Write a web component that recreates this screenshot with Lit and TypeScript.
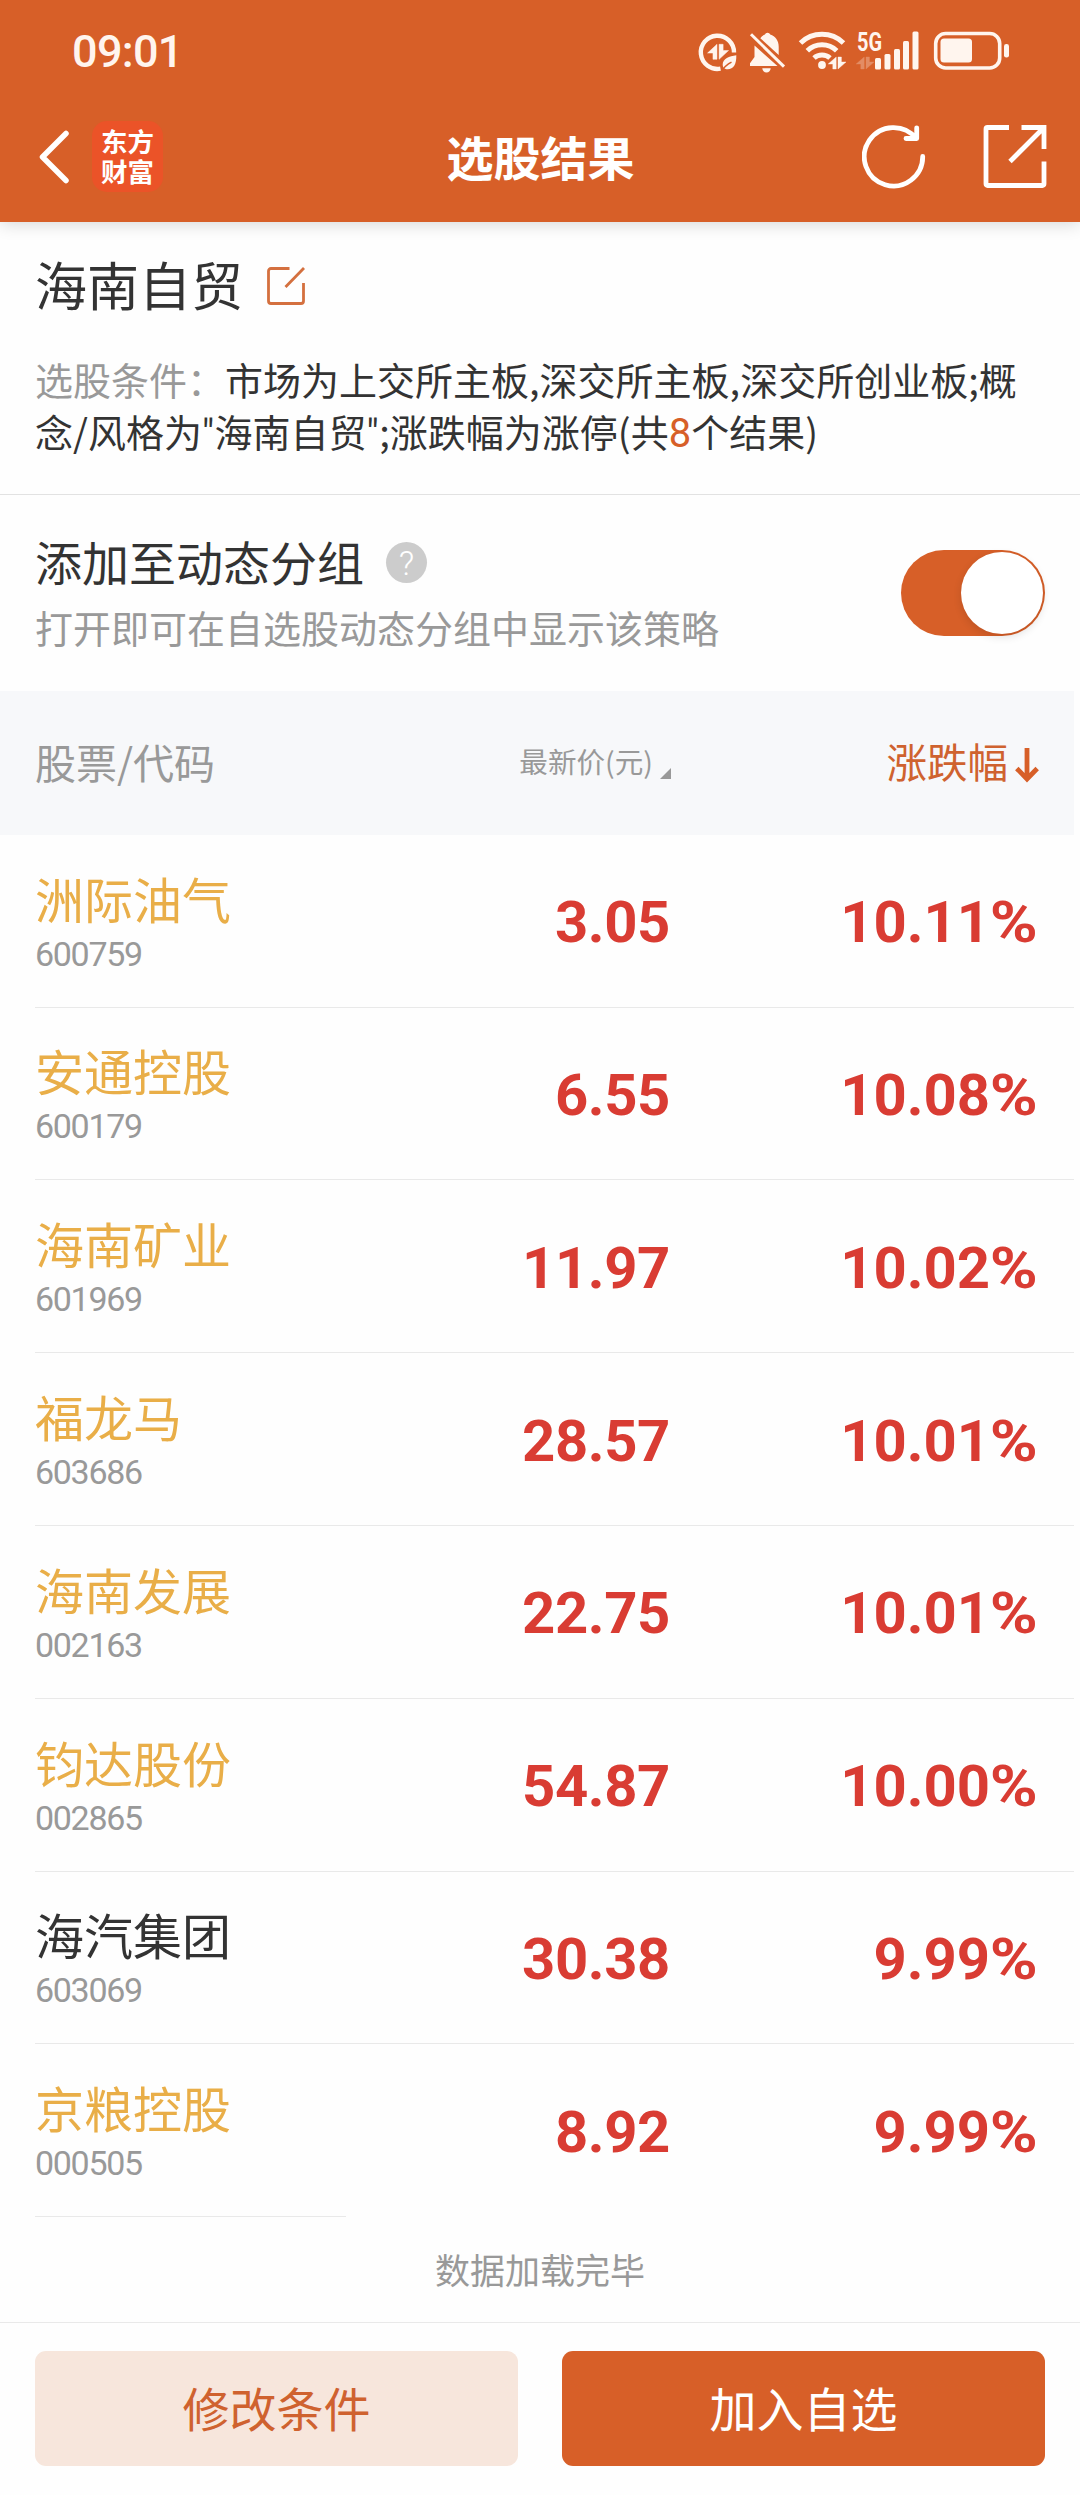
import { LitElement, html, svg, css } from "lit";
import { customElement, property, state } from "lit/decorators.js";
import { classMap } from "lit/directives/class-map.js";

interface Stock {
  name: string;
  code: string;
  price: string;
  change: string;
  plain?: boolean;
}

const STOCKS: Stock[] = [
  { name: "洲际油气", code: "600759", price: "3.05", change: "10.11" },
  { name: "安通控股", code: "600179", price: "6.55", change: "10.08" },
  { name: "海南矿业", code: "601969", price: "11.97", change: "10.02" },
  { name: "福龙马", code: "603686", price: "28.57", change: "10.01" },
  { name: "海南发展", code: "002163", price: "22.75", change: "10.01" },
  { name: "钧达股份", code: "002865", price: "54.87", change: "10.00" },
  { name: "海汽集团", code: "603069", price: "30.38", change: "9.99", plain: true },
  { name: "京粮控股", code: "000505", price: "8.92", change: "9.99" },
];

/* Up/down data arrows in an 18 x 12 box. */
const dataArrows = svg`<path d="M8.2 0v12H4.800V7H0.200zM10 0h3.400v5H18L10 12z" stroke="currentColor" stroke-width="0.400" stroke-linejoin="round"/>`;

@customElement("status-bar")
class StatusBar extends LitElement {
  static styles = css`
    :host {
      display: flex;
      align-items: flex-start;
      justify-content: space-between;
      height: 92px;
      padding: 30px 71px 0 72px;
      box-sizing: border-box;
      color: #fff5ee;
    }
    .time {
      font: 500 45px/44px Roboto, "Liberation Sans", sans-serif;
      letter-spacing: -0.7px;
    }
    .icons { display: flex; }
    svg { display: block; fill: currentColor; overflow: visible; }
    .saver { margin-right: 11px; }
    .bell { margin-right: 13px; }
    .wifi { margin-right: 10px; }
    .signal { margin-right: 15px; }
    .g5 { font: 700 25px Roboto, sans-serif; }
  `;

  render() {
    return html`
      <span class="time">09:01</span>
      <div class="icons">
        <svg class="saver" width="39" height="44" viewBox="698 30 39 44">
          <path d="M734 52.500A16.600 16.600 0 1 0 720.500 68.600" fill="none" stroke="currentColor" stroke-width="4.400"/>
          <g transform="translate(707.300 44.300) scale(1.180 1.250)">${dataArrows}</g>
          <path d="M736.300 55.300c-7 1-13.600 3.500-13.600 9.200 0 2 .8 4.300 3.600 4.700 6.500.9 10.300-4 10-13.900z"/>
          <path d="M721.500 71.500c2.500-4.200 5.500-7 10-9.300" fill="none" stroke="#d75f28" stroke-width="1.500"/>
        </svg>
        <svg class="bell" width="37" height="44" viewBox="748 30 37 44">
          <path d="M754.500 45.500V57l-4.500 6.200V66h27.500zM760.300 38.200c1.300-1.700 2.700-2.900 4.600-3.600a2.800 2.800 0 0 1 5.300 0c5.300 1.600 8.500 6.300 8.500 12.200v8.200zM762.300 68.300h8.400a4.200 4.200 0 0 1-8.400 0z"/>
          <path d="M751 34.300l33 32.300" fill="none" stroke="currentColor" stroke-width="3"/>
        </svg>
        <svg class="wifi" width="49" height="44" viewBox="798 30 49 44">
          <g fill="none" stroke="currentColor" stroke-width="5">
            <path d="M800.500 43a31 31 0 0 1 43 0"/>
            <path d="M807.300 50.800a21 21 0 0 1 29.400 0"/>
            <path d="M814 58a12 12 0 0 1 16 0"/>
          </g>
          <circle cx="822" cy="65" r="3.900"/>
          <g transform="translate(828 57)">${dataArrows}</g>
        </svg>
        <svg class="signal" width="62" height="44" viewBox="857 30 62 44">
          <text class="g5" x="857" y="50.500" textLength="25" lengthAdjust="spacingAndGlyphs">5G</text>
          <g transform="translate(856 57)" opacity="0.300">${dataArrows}</g>
          <rect x="875" y="58" width="6" height="11.500" rx="1.500"/>
          <rect x="884.500" y="54" width="6" height="15.500" rx="1.500"/>
          <rect x="894" y="49" width="6" height="20.500" rx="1.500"/>
          <rect x="903" y="41" width="6" height="28.500" rx="1.500"/>
          <rect x="912.500" y="31.500" width="6" height="38" rx="1.500"/>
        </svg>
        <svg class="battery" width="75" height="44" viewBox="934 30 75 44">
          <rect x="935.700" y="33.500" width="64" height="34.500" rx="10" fill="none" stroke="currentColor" stroke-width="3.600"/>
          <rect x="940.500" y="38.500" width="31.500" height="24" rx="3.500"/>
          <rect x="1004" y="44" width="5" height="13.500" rx="2.300"/>
        </svg>
      </div>
    `;
  }
}

@customElement("nav-bar")
class NavBar extends LitElement {
  @property() heading = "";

  static styles = css`
    :host {
      display: grid;
      grid-template-columns: 1fr auto 1fr;
      align-items: center;
      height: 130px;
      padding: 0 33px 1px 39px;
      box-sizing: border-box;
      color: #fff;
    }
    .left { display: flex; align-items: center; gap: 22px; }
    .right { display: flex; align-items: center; justify-content: flex-end; gap: 56px; }
    .heading {
      margin: 0;
      padding: 0 5px 2px 0;
      font-size: 47px;
      font-weight: 700;
      line-height: 60px;
    }
    .logo {
      display: flex;
      flex-direction: column;
      justify-content: center;
      align-items: center;
      width: 71px;
      height: 71px;
      padding-bottom: 2px;
      box-sizing: border-box;
      border-radius: 15px;
      background: #eb5328;
      font-size: 26.500px;
      font-weight: 700;
      line-height: 30px;
    }
    svg { display: block; fill: none; stroke: currentColor; }
  `;

  render() {
    return html`
      <div class="left">
        <svg width="31" height="54" viewBox="0 0 31 54" stroke-width="5.500" stroke-linecap="round" stroke-linejoin="round">
          <path d="M27 3.500L3.500 27 27 50.500"/>
        </svg>
        <div class="logo"><span>东方</span><span>财富</span></div>
      </div>
      <h1 class="heading">${this.heading}</h1>
      <div class="right">
        <svg width="65" height="64" viewBox="0 0 65 64" stroke-width="4.800" stroke-linecap="round" stroke-linejoin="round">
          <path d="M60.700 31.500A29.200 29.200 0 1 1 54.300 13.500M54.700 2.800V13.500H44"/>
        </svg>
        <svg width="64" height="64" viewBox="0 0 64 64" stroke-width="4.800">
          <path d="M26 2.500H4.500a1.500 1.500 0 0 0-1.500 1.500v55A1.500 1.500 0 0 0 4.500 60.500h55a1.500 1.500 0 0 0 1.500-1.500V36.500M38.500 2.500H61v21.500M60.500 3L27 36.500"/>
        </svg>
      </div>
    `;
  }
}

@customElement("toggle-switch")
class ToggleSwitch extends LitElement {
  @property({ type: Boolean }) on = false;

  static styles = css`
    :host { display: block; }
    .track {
      display: flex;
      box-sizing: border-box;
      width: 144px;
      height: 86px;
      padding: 2px;
      border-radius: 43px;
      background: #ddd;
    }
    .track.on { justify-content: flex-end; background: #d75f28; }
    .knob {
      width: 82px;
      height: 82px;
      border-radius: 50%;
      background: #fff;
      box-shadow: 0 3px 9px rgba(0, 0, 0, 0.12);
    }
  `;

  render() {
    return html`<div class=${classMap({ track: true, on: this.on })}><div class="knob"></div></div>`;
  }
}

@customElement("stock-row")
class StockRow extends LitElement {
  @property({ attribute: false }) stock!: Stock;
  @property({ type: Boolean }) last = false;

  static styles = css`
    :host { display: block; padding-left: 35px; }
    .row {
      display: grid;
      grid-template-columns: 311px 324px 368px;
      align-items: center;
      height: 171.800px;
    }
    .line { height: 1px; background: #e9e9e9; }
    .line.short { width: 311px; }
    .title { padding-top: 5px; }
    .name {
      font-size: 49px;
      line-height: 56px;
      color: #e9ae48;
    }
    .name.plain { color: #333; }
    .code {
      padding-top: 5px;
      font: 400 34px/46px Roboto, "Liberation Sans", sans-serif;
      letter-spacing: -1.300px;
      color: #999;
    }
    .num {
      padding-top: 3px;
      text-align: right;
      font: 700 58px/64px Roboto, "Liberation Sans", sans-serif;
      color: #d93c33;
    }
    .price { letter-spacing: -0.400px; }
    .pct {
      display: inline-block;
      margin-left: 5px;
      transform: scaleX(1.120);
      transform-origin: right;
    }
  `;

  render() {
    const s = this.stock;
    return html`
      <div class="row">
        <div class="title">
          <div class=${classMap({ name: true, plain: !!s.plain })}>${s.name}</div>
          <div class="code">${s.code}</div>
        </div>
        <div class="num price">${s.price}</div>
        <div class="num">${s.change}<span class="pct">%</span></div>
      </div>
      <div class=${classMap({ line: true, short: this.last })}></div>
    `;
  }
}

@customElement("app-root")
class AppRoot extends LitElement {
  @state() private stocks = STOCKS;

  static styles = css`
    :host {
      display: flex;
      flex-direction: column;
      width: 1080px;
      height: 2495px;
      overflow: hidden;
      background: #fefefe;
      color: #333;
      font-family: "Noto Sans CJK SC", "Noto Sans", sans-serif;
    }
    .top {
      height: 222px;
      flex: none;
      background: #d75f28;
      box-shadow: 0 2px 16px rgba(0, 0, 0, 0.16);
    }
    .strategy {
      box-sizing: border-box;
      height: 273px;
      padding: 34px 35px 0;
      border-bottom: 1px solid #e2e2e2;
    }
    .strategy-name { display: flex; align-items: center; gap: 23px; height: 60px; }
    .strategy-name h2 { margin: 0; padding-bottom: 4px; font-size: 52px; font-weight: 400; line-height: 60px; }
    .edit { display: block; }
    .conditions { margin: 37px 0 0; font-size: 38px; line-height: 52px; word-break: break-all; }
    .label { color: #999; }
    .quote { font-family: Roboto, sans-serif; letter-spacing: 0.500px; }
    .count { color: #d75f28; font-family: Roboto, sans-serif; font-size: 40px; line-height: 1; }
    .group {
      box-sizing: border-box;
      display: flex;
      align-items: center;
      justify-content: space-between;
      height: 196px;
      padding: 0 35px;
    }
    .group-text { padding-bottom: 3px; }
    .group-name { display: flex; align-items: center; gap: 22px; height: 62px; font-size: 47px; line-height: 62px; }
    .group-tip { font-size: 38px; line-height: 52px; color: #999; padding-top: 9px; }
    .help {
      width: 41px;
      height: 41px;
      margin-top: 2px;
      border-radius: 50%;
      background: #ccc;
      color: #fff;
      text-align: center;
      font: 300 34px/42px Roboto, sans-serif;
    }
    .columns {
      box-sizing: border-box;
      display: grid;
      grid-template-columns: 311px 325px 368px;
      align-items: center;
      width: 1074px;
      height: 143.800px;
      padding: 0 0 3px 35px;
      background: #f7f8fa;
      color: #999;
      font-size: 41px;
      line-height: 50px;
    }
    .col-price {
      display: flex;
      justify-content: flex-end;
      align-items: center;
      gap: 7px;
      font-size: 28.600px;
    }
    .col-price svg { display: block; margin-top: 24px; }
    .col-change { display: flex; justify-content: flex-end; align-items: center; gap: 7px; font-size: 40.500px; color: #cf622f; }
    .col-change svg { display: block; margin-top: 7px; }
    .rows { width: 1074px; }
    .done {
      display: flex;
      justify-content: center;
      align-items: center;
      height: 105px;
      padding-bottom: 2px;
      box-sizing: border-box;
      font-size: 35px;
      color: #999;
    }
    .actions {
      display: grid;
      grid-template-columns: 1fr 1fr;
      gap: 44px;
      padding: 28px 35px 0;
      border-top: 1px solid #e9e9e9;
    }
    .btn {
      height: 115px;
      box-sizing: border-box;
      padding: 0 0 4px;
      border: 0;
      border-radius: 11px;
      font: inherit;
      font-size: 47px;
      line-height: 111px;
    }
    .ghost { background: #f7e6dc; color: #cf622f; }
    .solid { background: #d75f28; color: #fff; }
  `;

  render() {
    return html`
      <header class="top">
        <status-bar></status-bar>
        <nav-bar heading="选股结果"></nav-bar>
      </header>
      <section class="strategy">
        <div class="strategy-name">
          <h2>海南自贸</h2>
          <svg class="edit" width="40" height="40" viewBox="0 0 40 40" fill="none" stroke="#d4703f" stroke-width="2.800">
            <path d="M23.500 2.500H5A2.500 2.500 0 0 0 2.500 5v30A2.500 2.500 0 0 0 5 37.500h30a2.500 2.500 0 0 0 2.500-2.500V17M38 2L19.500 21"/>
          </svg>
        </div>
        <p class="conditions"><span class="label">选股条件：</span>市场为上交所主板,深交所主板,深交所创业板;概念/风格为<span class="quote">"</span>海南自贸<span class="quote">"</span>;涨跌幅为涨停(共<span class="count">8</span>个结果)</p>
      </section>
      <section class="group">
        <div class="group-text">
          <div class="group-name">添加至动态分组<span class="help">?</span></div>
          <div class="group-tip">打开即可在自选股动态分组中显示该策略</div>
        </div>
        <toggle-switch on></toggle-switch>
      </section>
      <div class="columns">
        <div>股票/代码</div>
        <div class="col-price">
          最新价(元)
          <svg width="11" height="11" viewBox="0 0 11 11" fill="#999"><path d="M11 0v11H0z"/></svg>
        </div>
        <div class="col-change">
          涨跌幅
          <svg width="24" height="36" viewBox="0 0 24 36" fill="none" stroke="#d75f28" stroke-width="4.800">
            <path d="M12 1v31M1.800 21.500L12 32l10.200-10.500"/>
          </svg>
        </div>
      </div>
      <div class="rows">
        ${this.stocks.map(
          (s, i) => html`<stock-row .stock=${s} ?last=${i === this.stocks.length - 1}></stock-row>`
        )}
      </div>
      <div class="done">数据加载完毕</div>
      <footer class="actions">
        <button class="btn ghost">修改条件</button>
        <button class="btn solid">加入自选</button>
      </footer>
    `;
  }
}
